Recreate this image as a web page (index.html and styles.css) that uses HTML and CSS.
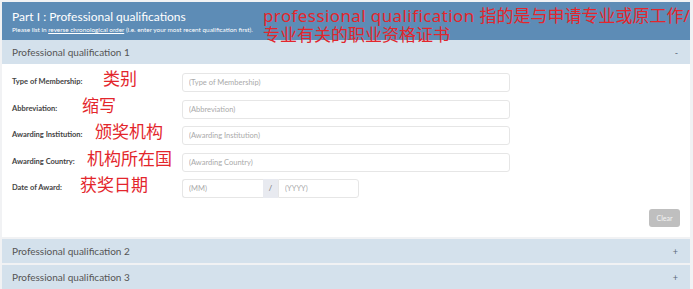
FILE: index.html
```html
<!DOCTYPE html>
<html lang="en">
<head>
  <meta charset="UTF-8" />
  <meta name="viewport" content="width=device-width, initial-scale=1.0" />
  <title>Professional qualifications</title>
  <link rel="stylesheet" href="styles.css">
</head>
<body>
  <div class="page">
    <div class="part-header">
      <h2>Part I : Professional qualifications</h2>
      <p class="hint">Please list in <u>reverse chronological order</u> (i.e. enter your most recent qualification first).</p>
      <div class="note"><span class="latin">professional qualification </span>指的是与申请专业或原工作/<br>专业有关的职业资格证书</div>
    </div>

    <div class="panel">
      <div class="panel-heading">
        <span>Professional qualification 1</span>
        <span class="toggle">-</span>
      </div>
      <div class="panel-body">
        <div class="row">
          <label>Type of Membership:</label>
          <span class="mark" style="left: 91px">类别</span>
          <input type="text" placeholder="(Type of Membership)">
        </div>
        <div class="row">
          <label>Abbreviation:</label>
          <span class="mark" style="left: 70px">缩写</span>
          <input type="text" placeholder="(Abbreviation)">
        </div>
        <div class="row">
          <label>Awarding Institution:</label>
          <span class="mark" style="left: 83px">颁奖机构</span>
          <input type="text" placeholder="(Awarding Institution)">
        </div>
        <div class="row">
          <label>Awarding Country:</label>
          <span class="mark" style="left: 75px">机构所在国</span>
          <input type="text" placeholder="(Awarding Country)">
        </div>
        <div class="row">
          <label>Date of Award:</label>
          <span class="mark" style="left: 68px">获奖日期</span>
          <div class="date-group">
            <input type="text" class="mm" placeholder="(MM)">
            <span class="addon">/</span>
            <input type="text" class="yyyy" placeholder="(YYYY)">
          </div>
        </div>
        <div class="actions">
          <button>Clear</button>
        </div>
      </div>
    </div>

    <div class="panel">
      <div class="panel-heading">
        <span>Professional qualification 2</span>
        <span class="toggle">+</span>
      </div>
    </div>

    <div class="panel">
      <div class="panel-heading">
        <span>Professional qualification 3</span>
        <span class="toggle">+</span>
      </div>
    </div>
  </div>
</body>
</html>
```

FILE: styles.css
```css
body {
  margin: 0;
  background: #f1f2f4;
  font-family: Lato, "Noto Sans", sans-serif;
  color: #555;
}

.page {
  padding: 2px 3px 0 2px;
}

.part-header {
  position: relative;
  background: #5d8cb6;
  color: white;
  padding: 7px 10px 6px;
  height: 25px;
}

.part-header h2 {
  margin: 0;
  font-size: 12px;
  font-weight: normal;
  line-height: 16px;
}

.hint {
  margin: 1px 0 0;
  font-size: 6.4px;
  line-height: 8px;
}

.note {
  position: absolute;
  left: 261px;
  top: 4px;
  color: #e3262c;
  font-family: "Noto Sans", "Noto Sans CJK SC", sans-serif;
  font-size: 17px;
  line-height: 19px;
  white-space: nowrap;
}

.note .latin {
  letter-spacing: 0.4px;
}

.panel {
  margin-bottom: 2px;
}

.panel-heading {
  display: flex;
  justify-content: space-between;
  align-items: center;
  height: 24px;
  padding: 0 12px 0 10px;
  background: #d4e1ec;
  font-size: 10px;
  color: #555;
}

.toggle {
  font-size: 9px;
  color: #5a6a7a;
}

.panel-body {
  background: white;
  padding: 9px 10px 10px;
}

.row {
  position: relative;
  display: flex;
  align-items: flex-start;
  margin-bottom: 7.5px;
}

.row label {
  width: 170px;
  font-size: 7.5px;
  font-weight: bold;
  color: #444;
  padding-top: 4px;
}

.mark {
  position: absolute;
  top: -5px;
  color: #e3262c;
  font-family: "Noto Sans CJK SC", sans-serif;
  font-size: 17px;
  line-height: 20px;
}

input {
  box-sizing: border-box;
  width: 328px;
  height: 19px;
  border: 1px solid #e6e6e6;
  border-radius: 3px;
  padding: 0 6px;
  font-family: Lato, sans-serif;
  font-size: 7.5px;
  color: #555;
}

input::placeholder {
  color: #aaa;
}

.date-group {
  display: flex;
}

.date-group .mm {
  width: 81px;
  border-radius: 3px 0 0 3px;
  border-right: none;
}

.date-group .yyyy {
  width: 81px;
  border-radius: 0 3px 3px 0;
}

.addon {
  width: 15px;
  height: 19px;
  background: #e8eaf0;
  font-size: 7.5px;
  color: #666;
  display: flex;
  align-items: center;
  justify-content: center;
}

.actions {
  display: flex;
  justify-content: flex-end;
  padding-top: 3.5px;
}

button {
  width: 31px;
  height: 18px;
  border: none;
  border-radius: 3px;
  background: #bfbfbf;
  color: #f4f4f4;
  font-family: Lato, sans-serif;
  font-size: 7px;
  padding: 0;
}
```
